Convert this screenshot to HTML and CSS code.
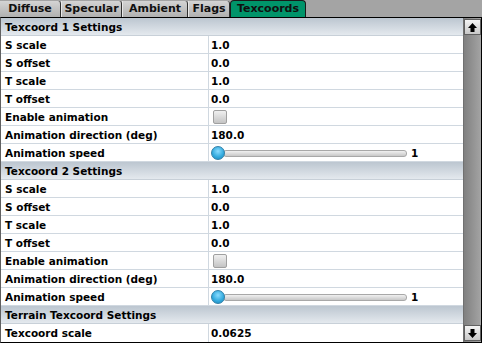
FILE: index.html
```html
<!DOCTYPE html>
<html>
<head>
<meta charset="utf-8">
<link rel="stylesheet" href="styles.css">
</head>
<body>
<div class="tabs">
  <div class="tab w61">Diffuse</div>
  <div class="tab w61">Specular</div>
  <div class="tab w66">Ambient</div>
  <div class="tab w42">Flags</div>
  <div class="tab active">Texcoords</div>
</div>
<div class="panel">
  <div class="list">
    <div class="hdr">Texcoord 1 Settings</div>
    <div class="row"><div class="lbl">S scale</div><div class="val">1.0</div></div>
    <div class="row"><div class="lbl">S offset</div><div class="val">0.0</div></div>
    <div class="row"><div class="lbl">T scale</div><div class="val">1.0</div></div>
    <div class="row"><div class="lbl">T offset</div><div class="val">0.0</div></div>
    <div class="row"><div class="lbl">Enable animation</div><div class="val"><span class="check"></span></div></div>
    <div class="row"><div class="lbl">Animation direction (deg)</div><div class="val">180.0</div></div>
    <div class="row"><div class="lbl">Animation speed</div><div class="val slider"><span class="knob"></span><span class="track"></span><span class="num">1</span></div></div>
    <div class="hdr">Texcoord 2 Settings</div>
    <div class="row"><div class="lbl">S scale</div><div class="val">1.0</div></div>
    <div class="row"><div class="lbl">S offset</div><div class="val">0.0</div></div>
    <div class="row"><div class="lbl">T scale</div><div class="val">1.0</div></div>
    <div class="row"><div class="lbl">T offset</div><div class="val">0.0</div></div>
    <div class="row"><div class="lbl">Enable animation</div><div class="val"><span class="check"></span></div></div>
    <div class="row"><div class="lbl">Animation direction (deg)</div><div class="val">180.0</div></div>
    <div class="row"><div class="lbl">Animation speed</div><div class="val slider"><span class="knob"></span><span class="track"></span><span class="num">1</span></div></div>
    <div class="hdr">Terrain Texcoord Settings</div>
    <div class="row last"><div class="lbl">Texcoord scale</div><div class="val">0.0625</div></div>
  </div>
  <div class="scroll">
    <div class="sbtn"><svg width="11" height="11" viewBox="0 0 11 11"><path d="M5.5 1 L10 6 L7.5 6 L7.5 10 L3.5 10 L3.5 6 L1 6 Z" fill="#000"/></svg></div>
    <div class="strack"></div>
    <div class="sbtn"><svg width="11" height="11" viewBox="0 0 11 11"><path d="M5.5 10 L10 5 L7.5 5 L7.5 1 L3.5 1 L3.5 5 L1 5 Z" fill="#000"/></svg></div>
  </div>
</div>
</body>
</html>
```
FILE: styles.css
```css
html, body {
  margin: 0;
  padding: 0;
  background: #a4a4a4;
  width: 482px;
  height: 343px;
  overflow: hidden;
  font-family: "DejaVu Sans", Verdana, sans-serif;
  font-weight: bold;
  font-size: 10.5px;
  color: #000;
}
.tabs {
  display: flex;
  height: 17px;
  align-items: flex-end;
}
.tab {
  height: 16px;
  box-sizing: border-box;
  text-align: center;
  line-height: 16px;
  background: linear-gradient(#d4d4d4, #b0b0b0);
  border-right: 1px solid #303030;
  border-left: 1px solid #e8e8e8;
  border-top-right-radius: 3px;
  font-size: 11px;
  color: #101010;
}
.w61 { width: 61px; }
.w66 { width: 66px; }
.w42 { width: 42px; }
.tab:first-child { border-left: none; }
.tab.active {
  width: 76px;
  background: #00946a;
  height: 17px;
  line-height: 16px;
  border: 1px solid #1a1a1a;
  border-bottom: none;
  border-radius: 4px 4px 0 0;
}
.panel {
  display: flex;
  height: 324px;
  border-top: 1px solid #000;
  border-bottom: 1px solid #000;
  border-left: 1px solid #606060;
  border-right: 1px solid #000;
  background: #fff;
}
.list {
  flex: 1;
  display: flex;
  flex-direction: column;
}
.hdr {
  height: 18px;
  box-sizing: border-box;
  line-height: 18px;
  padding-left: 4px;
  background: linear-gradient(#bcc6d0, #e4e9ee);
  border-bottom: 1px solid #c8d0d8;
}
.row {
  display: grid;
  grid-template-columns: 208px 1fr;
  height: 18px;
  box-sizing: border-box;
  border-bottom: 1px solid #d0d8e0;
  line-height: 18px;
}
.row.last { border-bottom: none; }
.lbl {
  padding-left: 4px;
  border-right: 1px solid #d0d8e0;
}
.val {
  padding-left: 2px;
  display: flex;
  align-items: center;
}
.check {
  display: inline-block;
  width: 12px;
  height: 12px;
  margin-left: 2px;
  border: 1px solid #a0a0a0;
  border-radius: 2px;
  background: linear-gradient(#f0f0f0, #c4c4c4);
}
.knob {
  width: 14px;
  height: 14px;
  border-radius: 50%;
  box-sizing: border-box;
  border: 1px solid #3080a8;
  background: radial-gradient(circle at 50% 35%, #8adcff, #30a8dc 60%, #2088b8);
  z-index: 1;
}
.track {
  width: 182px;
  height: 5px;
  margin-left: -2px;
  border: 1px solid #a8a8a8;
  border-radius: 3px;
  background: linear-gradient(#f0f0f0, #c8c8c8);
}
.num {
  margin-left: 4px;
}
.scroll {
  width: 17px;
  display: flex;
  flex-direction: column;
  background: linear-gradient(90deg, #808080, #a4a4a4);
  border-left: 1px solid #707070;
}
.sbtn {
  height: 16px;
  box-sizing: border-box;
  margin: 1px 0;
  border: 1px solid #606060;
  background: linear-gradient(#f4f4f4, #c8c8c8);
  display: flex;
  align-items: center;
  justify-content: center;
}
.strack { flex: 1; }
```
